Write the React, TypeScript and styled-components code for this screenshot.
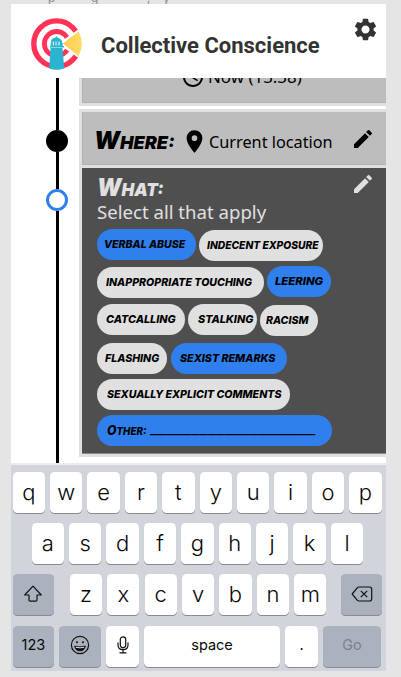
import React, { ReactNode, useLayoutEffect, useRef, useState } from "react";
import styled, { createGlobalStyle, css } from "styled-components";
import { MdAccessTime, MdEdit, MdLocationOn, MdSettings } from "react-icons/md";

const GlobalStyle = createGlobalStyle`
  * { box-sizing: border-box; }
  body { margin: 0; background: #e5e5e5; overflow: hidden; }
  svg { display: block; flex: none; }
`;

const Page = styled.div`
  height: 677px;
  padding-left: 11px;
  background: #e5e5e5;
  overflow: hidden;
`;

const FrameLabel = styled.div`
  height: 4px;
  overflow: hidden;
  display: flex;
  align-items: flex-end;
  padding-left: 37px;
  color: #8c8c8c;
  font: 12px/14px "Inter", sans-serif;
`;

const LabelPart = styled.span<{ $advance: number }>`
  flex: none;
  width: ${(p) => p.$advance}px;
  margin-bottom: -1px;
`;

const Phone = styled.main`
  width: 375px;
  height: 667px;
  display: flex;
  flex-direction: column;
  overflow: hidden;
  background: #fff;
`;

const Header = styled.header`
  flex: none;
  height: 74px;
  display: flex;
  align-items: flex-start;
  padding: 14px 7px 0 20px;
  color: #333;
`;

const Title = styled.h1`
  flex: 1;
  margin: 13px 0 0 18px;
  font: 700 22px/30px Roboto, sans-serif;
`;

const SettingsSlot = styled.div`
  margin-top: -2px;
`;

const Body = styled.section`
  flex: none;
  height: 385px;
  display: flex;
  overflow: hidden;
`;

const Timeline = styled.div`
  width: 68px;
  flex: none;
  display: flex;
  flex-direction: column;
  align-items: center;
  padding-left: 24px;
`;

const Track = styled.div<{ $height: number }>`
  width: 3px;
  flex: none;
  height: ${(p) => p.$height}px;
  background: #000;
`;

const Stop = styled.div<{ $active?: boolean }>`
  width: 22px;
  height: 22px;
  flex: none;
  border-radius: 50%;
  border: 3px solid ${(p) => (p.$active ? "#2f80ed" : "#000")};
  background: ${(p) => (p.$active ? "#fff" : "#000")};
`;

const Cards = styled.div`
  flex: 1;
  min-width: 0;
`;

const card = css`
  border: 3px solid #e0e0e0;
  border-right: 0;
  box-shadow: inset 1px -1px 0 #b2b2b2;
`;

const WhenCard = styled.div`
  ${card}
  height: 28px;
  border-top: 0;
  background: #bdbdbd;
  margin-bottom: 3px;
  overflow: hidden;
  display: flex;
  padding-left: 99px;
  font: 16px/22px "Noto Sans", sans-serif;
`;

const ClippedLine = styled.div`
  display: flex;
  gap: 3px;
  height: 22px;
  margin-top: -12px;
`;

const ClockSlot = styled.div`
  margin-top: -1px;
`;

const WhereCard = styled.div`
  ${card}
  height: 59px;
  background: #bdbdbd;
  display: flex;
  align-items: center;
  padding: 4px 11px 0 12px;
  font: 16px/24px "Noto Sans", sans-serif;
`;

const PinSlot = styled.div`
  margin: 2px 1px 0 6px;
`;

const Place = styled.div`
  margin-top: 2px;
`;

const WhatCard = styled.div`
  ${card}
  border-top: 0;
  height: 289px;
  background: #4f4f4f;
  color: #e0e0e0;
  padding: 4px 11px 0 15px;
  box-shadow: inset 0 -1px 0 #888;
`;

const CardTop = styled.div`
  display: flex;
  justify-content: space-between;
  height: 30px;
`;

const Push = styled.div<{ $top: number }>`
  margin: ${(p) => p.$top}px 0 0 auto;
`;

const Hint = styled.div`
  height: 27px;
  font: 17.5px/20px "Noto Sans", sans-serif;
`;

const Heading = styled.h2`
  margin: 2px 0 0;
  font: italic 900 18px/28px "Inter", sans-serif;
  text-transform: uppercase;
  span::first-letter {
    font-size: 24px;
  }
`;

const PillRow = styled.div<{ $height: number; $gap?: number }>`
  display: flex;
  gap: ${(p) => p.$gap ?? 3}px;
  height: ${(p) => p.$height}px;
`;

const Pill = styled.button<{ $width: number; $inset: number; $on?: boolean; $drop?: number }>`
  flex: none;
  width: ${(p) => p.$width}px;
  height: 31px;
  margin: ${(p) => p.$drop ?? 0}px 0 0;
  padding: 0 0 0 ${(p) => p.$inset}px;
  border: 0;
  border-radius: 15.5px;
  background: ${(p) => (p.$on ? "#2f80ed" : "#e0e0e0")};
  color: #000;
  text-align: left;
  font: italic 800 10.8px/31px "Inter", sans-serif;
`;

const FitOuter = styled.span<{ $width: number }>`
  display: inline-block;
  flex: none;
  vertical-align: top;
  width: ${(p) => p.$width}px;
  white-space: nowrap;
`;

const FitInner = styled.span`
  display: inline-block;
  vertical-align: top;
  transform-origin: 0 50%;
`;

/** Condenses or expands a single line so that it fills the given width. */
function Fit({ width, children }: { width: number; children: ReactNode }) {
  const ref = useRef<HTMLSpanElement>(null);
  const [scale, setScale] = useState(1);
  useLayoutEffect(() => {
    if (ref.current) setScale(width / ref.current.offsetWidth);
  }, [width]);
  return (
    <FitOuter $width={width}>
      <FitInner ref={ref} style={{ transform: `scaleX(${scale})` }}>{children}</FitInner>
    </FitOuter>
  );
}

type Choice = { label: string; width: number; inset: number; text: number; on?: boolean; drop?: number };

const rows: { height: number; gap?: number; items: Choice[] }[] = [
  { height: 37, items: [
    { label: "VERBAL ABUSE", width: 99, inset: 7, text: 81, on: true },
    { label: "INDECENT EXPOSURE", width: 124, inset: 8, text: 112, drop: 1 },
  ] },
  { height: 38, items: [
    { label: "INAPPROPRIATE TOUCHING", width: 167, inset: 9, text: 146, drop: 1 },
    { label: "LEERING", width: 64, inset: 8, text: 48, on: true },
  ] },
  { height: 39, items: [
    { label: "CATCALLING", width: 88, inset: 9, text: 70 },
    { label: "STALKING", width: 69, inset: 10, text: 55 },
    { label: "RACISM", width: 58, inset: 6, text: 42, drop: 1 },
  ] },
  { height: 36, gap: 4, items: [
    { label: "FLASHING", width: 70, inset: 8, text: 54 },
    { label: "SEXIST REMARKS", width: 116, inset: 9, text: 95, on: true },
  ] },
  { height: 36, items: [
    { label: "SEXUALLY EXPLICIT COMMENTS", width: 193, inset: 10, text: 174 },
  ] },
];

const OtherName = styled.span`
  text-transform: uppercase;
  display: inline-block;
  &::first-letter { font-size: 13.5px; }
`;

const Blank = styled.span`
  display: inline-block;
  margin-left: 5px;
  vertical-align: top;
`;

const Keyboard = styled.footer`
  flex: 1;
  background: #d1d4db;
  border-top: 2px solid #ececee;
  padding: 7px 4px 0 1.7px;
  display: flex;
  flex-direction: column;
  gap: 10.2px;
`;

const KeyRow = styled.div<{ $indent?: number }>`
  display: flex;
  height: 41px;
  flex: none;
  gap: 5.1px;
  padding-left: ${(p) => p.$indent ?? 0}px;
`;

const Key = styled.button<{ $width?: number; $tone?: "dark"; $small?: boolean; $after?: number; $muted?: boolean }>`
  flex: none;
  width: ${(p) => p.$width ?? 32.3}px;
  margin: 0 ${(p) => p.$after ?? 0}px 0 0;
  padding: 0 0 2px;
  display: flex;
  align-items: center;
  justify-content: center;
  border: 0;
  border-radius: 4.5px;
  background: ${(p) => (p.$tone ? "#abb1bd" : "#fff")};
  box-shadow: 0 1px 0 #898b90;
  color: ${(p) => (p.$muted ? "#7c828d" : "#080808")};
  font: ${(p) => (p.$small ? "400 14.5px" : "300 22px")}/30px "Inter", sans-serif;
`;

function Logo() {
  return (
    <svg width="52" height="52" viewBox="0 0 52 52">
      <g fill="none" stroke="#ff3355">
        <circle cx="25.6" cy="25.7" r="22.8" strokeWidth="5.4" />
        <circle cx="25.6" cy="25.7" r="12.2" strokeWidth="4.8" />
      </g>
      <path d="M27 25.7 52 8V43Z" fill="#fff" />
      <defs>
        <linearGradient id="beam">
          <stop stopColor="#ffc94f" />
          <stop offset="1" stopColor="#ffdd66" />
        </linearGradient>
      </defs>
      <path d="M32 25.5 47.5 13.5A25.4 25.4 0 0 1 47.5 38Z" fill="url(#beam)" />
      <path d="M19.5 30h12l1.8 20.5Q25.6 53 18.2 50.5Z" fill="#2ab4d0" />
      <path d="M20 23q.8-2.7 4.5-3.5l1-1.5 1 1.5Q30 20.500 31 23v2h.7v4h-12v-4h.6Z" fill="#2ab4d0" />
      <path d="M22.300 23.500v4M25 23.500v4M28 23.500v4" stroke="#fff" strokeWidth="1" />
      <path d="M19 28.800h14" stroke="#2ab4d0" strokeWidth="1.500" />
    </svg>
  );
}

const ShiftIcon = () => (
  <svg width="20" height="18" viewBox="0 0 20 18" fill="none" stroke="#111" strokeWidth="1.200" strokeLinejoin="round">
    <path d="M10 1.200 18.300 10H14v5Q14 16.200 12.800 16.200H7.200Q6 16.200 6 15V10H1.700Z" />
  </svg>
);

const DeleteIcon = () => (
  <svg width="22" height="18" viewBox="0 0 22 18" fill="none" stroke="#111" strokeWidth="1.200" strokeLinejoin="round">
    <path d="M8 2h10.500Q20.700 2 20.700 4.200v9.600Q20.700 16 18.500 16H8Q7 16 6.200 15.200L1.200 9 6.200 2.800Q7 2 8 2ZM9.800 5.800l6.400 6.400M16.200 5.800l-6.400 6.400" />
  </svg>
);

const EmojiIcon = () => (
  <svg width="20" height="20" viewBox="0 0 20 20" fill="none" stroke="#111" strokeWidth="1.200">
    <circle cx="10" cy="10" r="8.600" />
    <circle cx="7" cy="7.200" r="1.050" fill="#111" stroke="none" />
    <circle cx="13" cy="7.200" r="1.050" fill="#111" stroke="none" />
    <path d="M4.500 11Q10 12.400 15.500 11 14.700 16 10 16T4.500 11Z" fill="#111" strokeWidth=".6" />
    <path d="M5.800 12.300Q10 13.300 14.200 12.300" stroke="#d5d8de" strokeWidth="1" />
  </svg>
);

const MicIcon = () => (
  <svg width="12" height="18" viewBox="0 0 12 18" fill="none" stroke="#111" strokeWidth="1.200">
    <rect x="3.300" y=".8" width="5.400" height="11" rx="2.700" />
    <path d="M1 6.500V9Q1 13.700 6 13.700T11 9V6.500M6 13.700v3M2.500 16.800h7" />
  </svg>
);

export default function App() {
  return (
    <Page>
      <GlobalStyle />
      <FrameLabel>
        <LabelPart $advance={43}>p</LabelPart>
        <LabelPart $advance={56}>g</LabelPart>
        <LabelPart $advance={16}>,</LabelPart>
        <LabelPart $advance={8}>y</LabelPart>
      </FrameLabel>
      <Phone>
        <Header>
          <Logo />
          <Title><Fit width={219}>Collective Conscience</Fit></Title>
          <SettingsSlot><MdSettings size={27} /></SettingsSlot>
        </Header>
        <Body>
          <Timeline>
            <Track $height={52} />
            <Stop />
            <Track $height={37} />
            <Stop $active />
            <Track $height={252} />
          </Timeline>
          <Cards>
            <WhenCard>
              <ClippedLine>
                <ClockSlot><MdAccessTime size={24} /></ClockSlot>
                <Fit width={94}>Now (13:38)</Fit>
              </ClippedLine>
            </WhenCard>
            <WhereCard>
              <Heading><Fit width={81}>Where:</Fit></Heading>
              <PinSlot><MdLocationOn size={27} /></PinSlot>
              <Place><Fit width={124}>Current location</Fit></Place>
              <Push $top={-4}><MdEdit size={24} /></Push>
            </WhereCard>
            <WhatCard>
              <CardTop>
                <Heading><Fit width={67}>What:</Fit></Heading>
                <Push $top={0}><MdEdit size={24} /></Push>
              </CardTop>
              <Hint><Fit width={169}>Select all that apply</Fit></Hint>
              {rows.map((row, i) => (
                <PillRow key={i} $height={row.height} $gap={row.gap}>
                  {row.items.map((c) => (
                    <Pill key={c.label} $width={c.width} $inset={c.inset} $on={c.on} $drop={c.drop}>
                      <Fit width={c.text}>{c.label}</Fit>
                    </Pill>
                  ))}
                </PillRow>
              ))}
              <Pill $width={235} $inset={10} $on>
                <Fit width={39}><OtherName>Other:</OtherName></Fit>
                <Blank><Fit width={166}>____________________</Fit></Blank>
              </Pill>
            </WhatCard>
          </Cards>
        </Body>
        <Keyboard>
          <KeyRow>{[..."qwertyuiop"].map((k) => <Key key={k}>{k}</Key>)}</KeyRow>
          <KeyRow $indent={19}>{[..."asdfghjkl"].map((k) => <Key key={k}>{k}</Key>)}</KeyRow>
          <KeyRow>
            <Key $width={41} $tone="dark" $after={11}><ShiftIcon /></Key>
            {[..."zxcvbnm"].map((k) => <Key key={k} $after={k === "m" ? 9.6 : 0}>{k}</Key>)}
            <Key $width={41} $tone="dark"><DeleteIcon /></Key>
          </KeyRow>
          <KeyRow>
            <Key $width={41.5} $tone="dark" $small>123</Key>
            <Key $width={42} $tone="dark"><EmojiIcon /></Key>
            <Key><MicIcon /></Key>
            <Key $width={136.5} $small>space</Key>
            <Key $small>.</Key>
            <Key $width={58.5} $tone="dark" $small $muted>Go</Key>
          </KeyRow>
        </Keyboard>
      </Phone>
    </Page>
  );
}
